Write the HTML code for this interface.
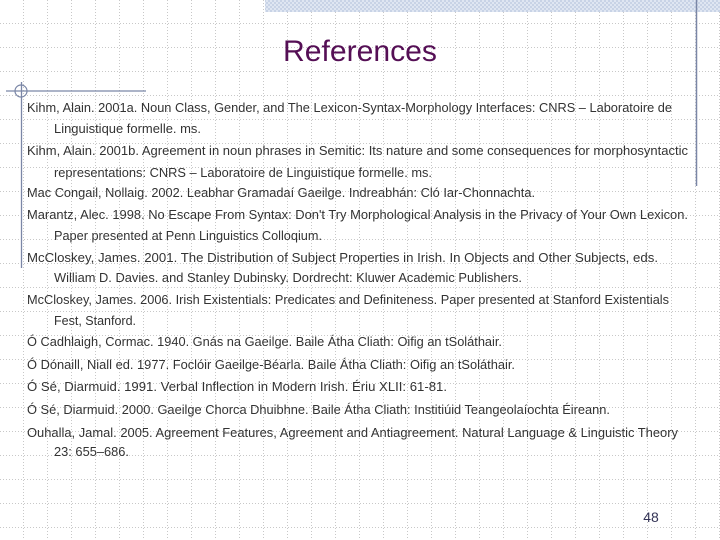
<!DOCTYPE html>
<html><head><meta charset="utf-8"><style>
html,body{margin:0;padding:0}
body{width:720px;height:540px;overflow:hidden;position:relative;background:#fff;}
svg{position:absolute;left:0;top:0}
</style></head><body>
<svg width="720" height="540" xmlns="http://www.w3.org/2000/svg">
<defs>
<pattern id="grid" x="0" y="0" width="24" height="24" patternUnits="userSpaceOnUse">
<line x1="23.5" y1="0" x2="23.5" y2="24" stroke="#c8c8c8" stroke-width="1" stroke-dasharray="1,2"/>
<line x1="0" y1="23.5" x2="24" y2="23.5" stroke="#c8c8c8" stroke-width="1" stroke-dasharray="1,2"/>
</pattern>
<pattern id="ck" width="4" height="4" patternUnits="userSpaceOnUse"><rect width="4" height="4" fill="#dfe6f2"/><rect width="2" height="2" fill="#c8d3e6"/><rect x="2" y="2" width="2" height="2" fill="#c8d3e6"/></pattern></defs>
<rect width="720" height="540" fill="url(#grid)"/>
<rect x="265" y="0" width="455" height="12" fill="url(#ck)"/>
<line x1="696.5" y1="0" x2="696.5" y2="186" stroke="#7a86a6" stroke-width="1.5"/>
<line x1="6" y1="91" x2="146" y2="91" stroke="#7a86a6" stroke-width="1.3"/>
<line x1="21.5" y1="82" x2="21.5" y2="268" stroke="#7a86a6" stroke-width="1.3"/>
<circle cx="21" cy="91" r="6" fill="none" stroke="#7a86a6" stroke-width="1.2"/>
<text x="360" y="61" text-anchor="middle" font-family="Liberation Sans, sans-serif" font-size="30" fill="#550f55" textLength="154" lengthAdjust="spacingAndGlyphs">References</text>
<g font-family="Liberation Sans, sans-serif" font-size="12.5" fill="#333">
<text x="27" y="112" textLength="645" lengthAdjust="spacingAndGlyphs">Kihm, Alain. 2001a. Noun Class, Gender, and The Lexicon-Syntax-Morphology Interfaces: CNRS – Laboratoire de</text>
<text x="54" y="133" textLength="147" lengthAdjust="spacingAndGlyphs">Linguistique formelle. ms.</text>
<text x="27" y="155" textLength="661" lengthAdjust="spacingAndGlyphs">Kihm, Alain. 2001b. Agreement in noun phrases in Semitic: Its nature and some consequences for morphosyntactic</text>
<text x="54" y="177" textLength="378" lengthAdjust="spacingAndGlyphs">representations: CNRS – Laboratoire de Linguistique formelle. ms.</text>
<text x="27" y="197" textLength="508" lengthAdjust="spacingAndGlyphs">Mac Congail, Nollaig. 2002. Leabhar Gramadaí Gaeilge. Indreabhán: Cló Iar-Chonnachta.</text>
<text x="27" y="219" textLength="661" lengthAdjust="spacingAndGlyphs">Marantz, Alec. 1998. No Escape From Syntax: Don't Try Morphological Analysis in the Privacy of Your Own Lexicon.</text>
<text x="54" y="240" textLength="268" lengthAdjust="spacingAndGlyphs">Paper presented at Penn Linguistics Colloqium.</text>
<text x="27" y="262" textLength="631" lengthAdjust="spacingAndGlyphs">McCloskey, James. 2001. The Distribution of Subject Properties in Irish. In Objects and Other Subjects, eds.</text>
<text x="54" y="282" textLength="468" lengthAdjust="spacingAndGlyphs">William D. Davies. and Stanley Dubinsky. Dordrecht: Kluwer Academic Publishers.</text>
<text x="27" y="304" textLength="642" lengthAdjust="spacingAndGlyphs">McCloskey, James. 2006. Irish Existentials: Predicates and Definiteness. Paper presented at Stanford Existentials</text>
<text x="54" y="325" textLength="82" lengthAdjust="spacingAndGlyphs">Fest, Stanford.</text>
<text x="27" y="346" textLength="475" lengthAdjust="spacingAndGlyphs">Ó Cadhlaigh, Cormac. 1940. Gnás na Gaeilge. Baile Átha Cliath: Oifig an tSoláthair.</text>
<text x="27" y="369" textLength="488" lengthAdjust="spacingAndGlyphs">Ó Dónaill, Niall ed. 1977. Foclóir Gaeilge-Béarla. Baile Átha Cliath: Oifig an tSoláthair.</text>
<text x="27" y="391" textLength="420" lengthAdjust="spacingAndGlyphs">Ó Sé, Diarmuid. 1991. Verbal Inflection in Modern Irish. Ériu XLII: 61-81.</text>
<text x="27" y="414" textLength="583" lengthAdjust="spacingAndGlyphs">Ó Sé, Diarmuid. 2000. Gaeilge Chorca Dhuibhne. Baile Átha Cliath: Institiúid Teangeolaíochta Éireann.</text>
<text x="27" y="437" textLength="651" lengthAdjust="spacingAndGlyphs">Ouhalla, Jamal. 2005. Agreement Features, Agreement and Antiagreement. Natural Language &amp; Linguistic Theory</text>
<text x="54" y="456" textLength="75" lengthAdjust="spacingAndGlyphs">23: 655–686.</text>
</g>
<text x="651" y="522" text-anchor="middle" font-family="Liberation Sans, sans-serif" font-size="14" fill="#333355">48</text>
</svg>
</body></html>
